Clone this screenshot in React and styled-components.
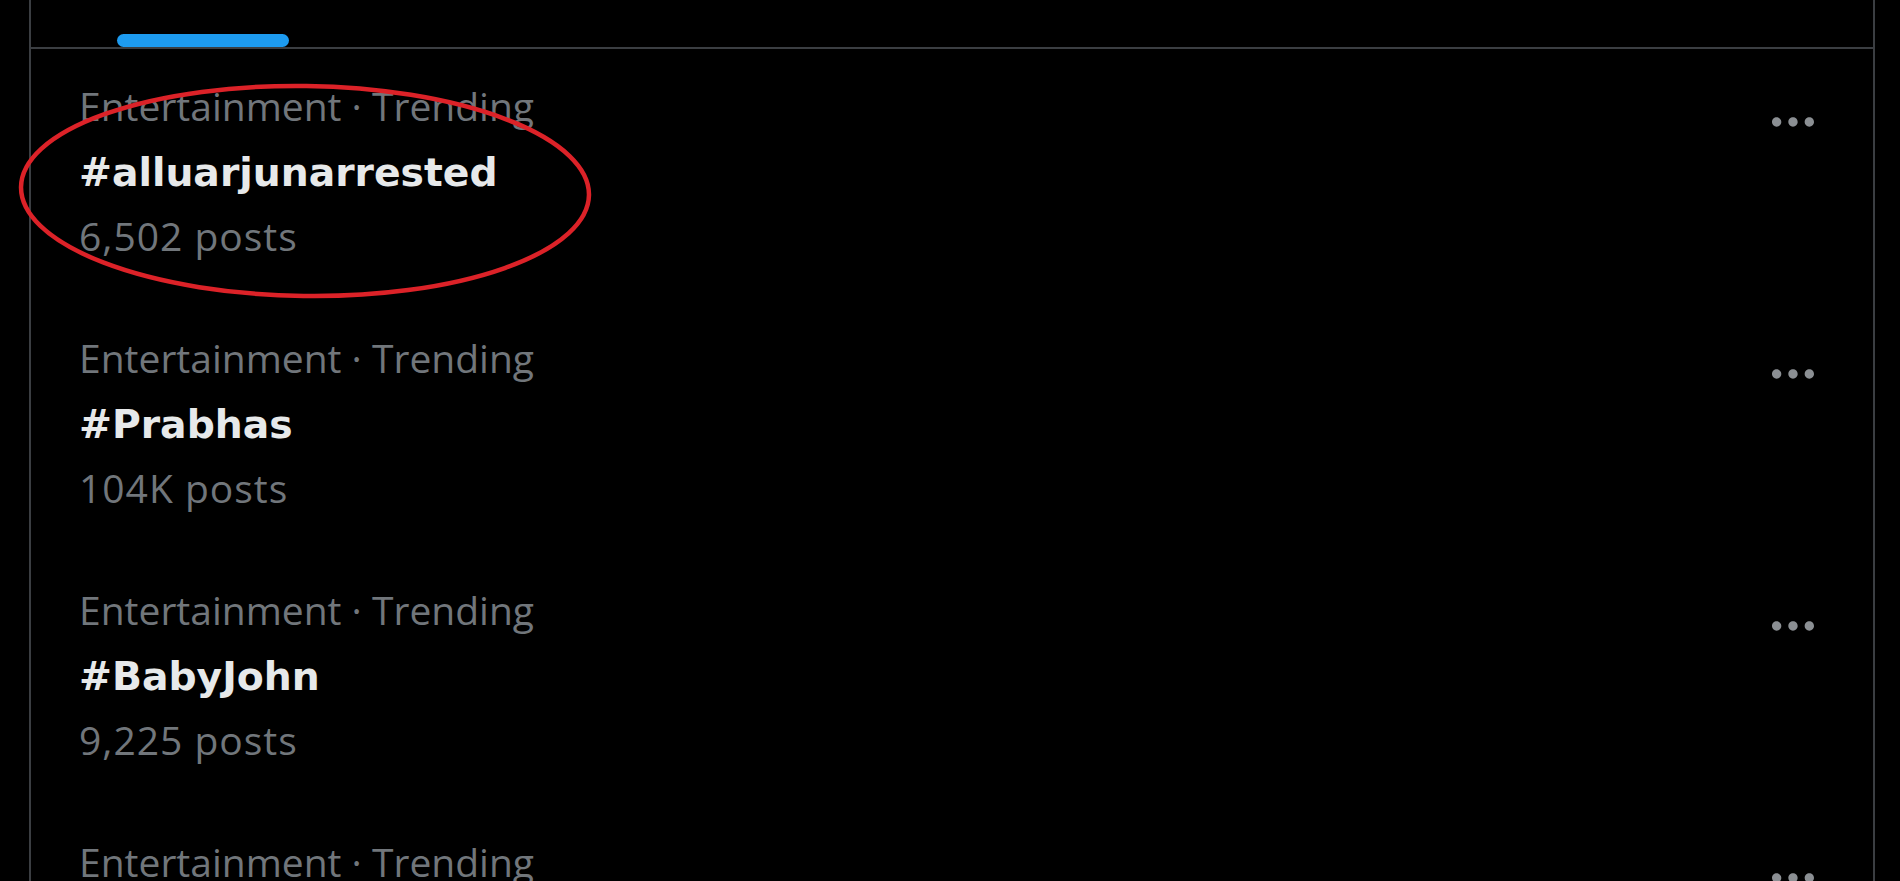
import React from "react";
import styled, { createGlobalStyle } from "styled-components";

const trends = [
  { id: 1, category: "Entertainment · Trending", tag: "#alluarjunarrested", posts: "6,502 posts", circled: true },
  { id: 2, category: "Entertainment · Trending", tag: "#Prabhas", posts: "104K posts" },
  { id: 3, category: "Entertainment · Trending", tag: "#BabyJohn", posts: "9,225 posts" },
  { id: 4, category: "Entertainment · Trending", tag: "#Pushpa2", posts: "58.1K posts" },
];

const GlobalStyle = createGlobalStyle`
  html, body {
    margin: 0;
    height: 100%;
    overflow: hidden;
    background: #000;
  }
`;

const MoreIcon = () => (
  <svg viewBox="0 0 24 24" width="56" height="56" aria-hidden="true">
    <path d="M3 12c0-1.1.9-2 2-2s2 .9 2 2-.9 2-2 2-2-.9-2-2zm9 2c1.1 0 2-.9 2-2s-.9-2-2-2-2 .9-2 2 .9 2 2 2zm7 0c1.1 0 2-.9 2-2s-.9-2-2-2-2 .9-2 2 .9 2 2 2z" />
  </svg>
);

function TrendItem({ item }) {
  const { category, tag, posts, circled } = item;
  return (
    <TrendRow>
      <TrendText>
        <Category>{category}</Category>
        <Tag>{tag}</Tag>
        <Count>{posts}</Count>
      </TrendText>
      <MoreButton>
        <MoreIcon />
      </MoreButton>
      {circled && (
        <Circle viewBox="0 0 580 220">
          <ellipse cx="290" cy="110" rx="284" ry="105" />
        </Circle>
      )}
    </TrendRow>
  );
}

export default function App() {
  return (
    <>
      <GlobalStyle />
      <Column>
        <TabBar>
          <Indicator />
        </TabBar>
        {trends.map(item => (
          <TrendItem key={item.id} item={item} />
        ))}
      </Column>
    </>
  );
}

const Column = styled.div`
  box-sizing: border-box;
  margin-left: 29px;
  width: 1846px;
  min-height: 100vh;
  border-left: 2px solid #3b3e42;
  border-right: 2px solid #3b3e42;
  font-family: "Open Sans", "Liberation Sans", sans-serif;
`;

const TabBar = styled.div`
  height: 47px;
  display: flex;
  align-items: flex-end;
  padding-left: 86px;
  border-bottom: 2px solid #3b3e42;
`;

const Indicator = styled.div`
  width: 172px;
  height: 13px;
  border-radius: 7px;
  background: #1d9bf0;
`;

const TrendRow = styled.div`
  position: relative;
  display: flex;
  justify-content: space-between;
  align-items: flex-start;
  padding: 33px 52px 41px 48px;
`;

const TrendText = styled.div`
  display: flex;
  flex-direction: column;
`;

const Category = styled.div`
  font-size: 39px;
  line-height: 48px;
  color: #71767b;
`;

const Tag = styled.div`
  margin-top: 13px;
  font-family: "DejaVu Sans", "Open Sans", sans-serif;
  font-weight: 700;
  font-size: 39.3px;
  line-height: 60px;
  color: #e7e9ea;
`;

const Count = styled(Category)`
  margin-top: 9px;
  letter-spacing: 1px;
`;

const MoreButton = styled.div`
  margin-top: 12px;
  width: 56px;
  height: 56px;
  fill: #8b8f93;
`;

const Circle = styled.svg`
  position: absolute;
  left: -16px;
  top: 32px;
  width: 580px;
  height: 220px;
  overflow: visible;
  transform: rotate(0.8deg);
  pointer-events: none;

  ellipse {
    fill: none;
    stroke: #dc2228;
    stroke-width: 4.5;
  }
`;
